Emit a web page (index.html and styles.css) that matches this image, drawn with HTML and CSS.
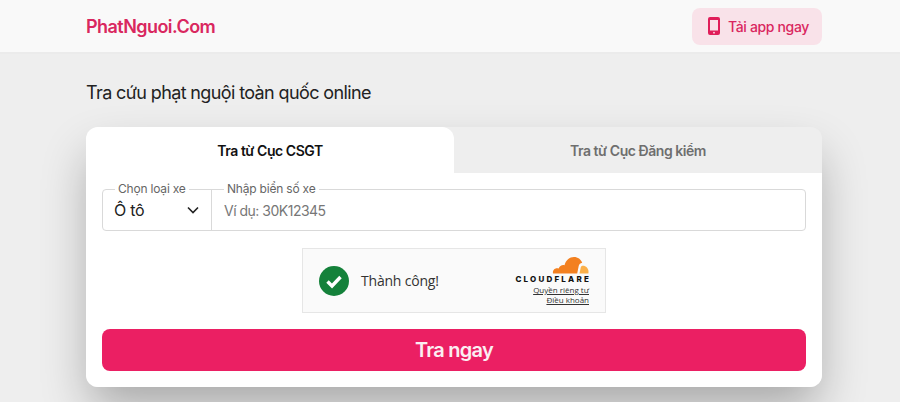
FILE: index.html
```html
<!DOCTYPE html>
<html lang="vi">
<head>
  <meta charset="UTF-8">
  <title>PhatNguoi.Com</title>
  <link rel="stylesheet" href="styles.css">
</head>
<body>
  <header class="topbar">
    <div class="wrap topbar-inner">
      <a class="logo" href="#">PhatNguoi.Com</a>
      <a class="app-btn" href="#">
        <svg class="app-icon" width="12" height="18" viewBox="0 0 12 18">
          <path fill-rule="evenodd" d="M2 0h8a2 2 0 0 1 2 2v14a2 2 0 0 1-2 2H2a2 2 0 0 1-2-2V2a2 2 0 0 1 2-2zM2 3v10.500h8V3z" fill="#e01e5a"/>
          <circle cx="6" cy="15.700" r="0.900" fill="#fbdde6"/>
        </svg>
        <span>Tải app ngay</span>
      </a>
    </div>
  </header>

  <main class="wrap">
    <h1 class="title">Tra cứu phạt nguội toàn quốc online</h1>

    <section class="card">
      <div class="tabs">
        <button class="tab tab-active">Tra từ Cục CSGT</button>
        <button class="tab">Tra từ Cục Đăng kiểm</button>
      </div>

      <form class="panel">
        <div class="fields">
          <fieldset class="field field-type">
            <legend>Chọn loại xe</legend>
            <div class="select-value">
              <span>Ô tô</span>
              <svg width="12" height="8" viewBox="0 0 12 8"><path d="M1 1.500l5 5 5-5" fill="none" stroke="#222" stroke-width="1.600"/></svg>
            </div>
          </fieldset>
          <fieldset class="field field-plate">
            <legend>Nhập biển số xe</legend>
            <input class="plate-input" type="text" placeholder="Ví dụ: 30K12345">
          </fieldset>
        </div>

        <div class="captcha">
          <div class="captcha-status">
            <svg width="30" height="30" viewBox="0 0 30 30">
              <circle cx="15" cy="15" r="15" fill="#14813a"/>
              <path d="M8.500 15.500l4.500 4.500 8.500-9" fill="none" stroke="#fff" stroke-width="3.400"/>
            </svg>
            <span>Thành công!</span>
          </div>
          <div class="captcha-brand">
            <svg class="cf-cloud" width="37" height="18" viewBox="0 0 37 18">
              <path d="M1 17.500c-.6-3 1.500-5.200 4-5.200.6 0 1.200.1 1.700.3C7.500 10 10 8.600 12.500 9.200 13.800 4.200 17.500 1 22 1c3.800 0 7 2.300 8.200 5.800-1.900.4-3 1.500-3.500 3.200l-1.500 7.500z" fill="#f38020"/>
              <path d="M27.500 17.500l1.300-6.300c.3-1 1-1.500 2-1.500 3.300 0 5.700 2.700 5.700 6 0 .6-.1 1.200-.2 1.800z" fill="#fbb04a"/>
            </svg>
            <div class="cf-name">CLOUDFLARE</div>
            <a href="#">Quyền riêng tư</a>
            <a href="#">Điều khoản</a>
          </div>
        </div>

        <button class="submit" type="button">Tra ngay</button>
      </form>
    </section>
  </main>
</body>
</html>
```

FILE: styles.css
```css
* {
  box-sizing: border-box;
}
body {
  margin: 0;
  height: 402px;
  overflow: hidden;
  background-color: #eeeeee;
  font-family: Inter, "Liberation Sans", sans-serif;
  color: #222;
}
.wrap {
  width: 736px;
  margin-left: 86px;
}
.topbar {
  height: 54px;
  background-color: #f9f9f9;
  border-bottom: 2px solid #ebebeb;
}
.topbar-inner {
  height: 52px;
  display: flex;
  align-items: center;
  justify-content: space-between;
}
.logo {
  font-size: 18px;
  font-weight: 600;
  letter-spacing: -0.55px;
  color: #d9275f;
  text-decoration: none;
}
.app-btn {
  width: 130px;
  height: 37px;
  padding-left: 16px;
  display: flex;
  align-items: center;
  gap: 8px;
  background-color: #f9e2e9;
  border-radius: 8px;
  font-size: 14px;
  font-weight: 500;
  letter-spacing: -0.35px;
  color: #d9275f;
  text-decoration: none;
}
.title {
  margin: 28px 0 23px;
  font-size: 18px;
  line-height: 22px;
  font-weight: 400;
  letter-spacing: -0.62px;
  color: #222;
}
.card {
  border-radius: 12px;
  box-shadow: 0 24px 48px -4px rgba(0,0,0,0.3);
}
.tabs {
  display: flex;
  height: 46px;
}
.tab {
  flex: 1;
  border: none;
  background: #eeeeee;
  font-family: inherit;
  font-size: 14px;
  font-weight: 600;
  letter-spacing: -0.45px;
  color: #6e6e6e;
  border-radius: 12px 12px 0 0;
}
.tab-active {
  background: white;
  color: #111;
}
.panel {
  height: 214px;
  padding: 16px;
  background: white;
  border-radius: 0 0 12px 12px;
}
.fields {
  display: flex;
  height: 42px;
  border: 1px solid #d9d9d9;
  border-radius: 4px;
}
.field {
  margin: -9px 0 0;
  padding: 0 12px;
  border: none;
  min-width: 0;
  border-top: 1px solid transparent;
}
.field legend {
  padding: 0 3px;
  font-size: 12px;
  line-height: 16px;
  letter-spacing: -0.2px;
  color: #666;
  background: white;
}
.field-type {
  width: 109px;
  border-right: 1px solid #d9d9d9;
}
.field-plate {
  flex: 1;
}
.select-value {
  display: flex;
  align-items: center;
  justify-content: space-between;
  font-size: 16px;
  line-height: 24px;
  letter-spacing: -0.3px;
  margin: 1px 0 0 -1px;
}
.plate-input {
  width: 100%;
  height: 24px;
  margin-top: 1px;
  padding: 0;
  border: none;
  outline: none;
  font-family: inherit;
  font-size: 14px;
  letter-spacing: -0.5px;
  color: #222;
}
.plate-input::placeholder {
  color: #777;
}
.captcha {
  width: 304px;
  height: 65px;
  margin: 17px auto 16px;
  padding: 0 16px;
  display: flex;
  align-items: center;
  justify-content: space-between;
  background: #fafafa;
  border: 1px solid #e6e6e6;
}
.captcha-status {
  display: flex;
  align-items: center;
  gap: 12px;
  font-family: "Open Sans", sans-serif;
  font-size: 14px;
  letter-spacing: -0.2px;
  color: #333;
}
.captcha-brand {
  display: flex;
  flex-direction: column;
  align-items: flex-end;
  font-family: "Open Sans", sans-serif;
}
.captcha-brand a {
  font-size: 8px;
  line-height: 10px;
  color: #333;
}
.cf-name {
  font-family: Inter, sans-serif;
  font-size: 8px;
  line-height: 11px;
  font-weight: 800;
  letter-spacing: 2.2px;
  margin-right: -2px;
  color: #111;
}
.submit {
  display: block;
  width: 100%;
  height: 42px;
  border: none;
  border-radius: 8px;
  background-color: #eb1f63;
  font-family: inherit;
  font-size: 20px;
  font-weight: 600;
  letter-spacing: -0.75px;
  color: #fbeef2;
}
```
